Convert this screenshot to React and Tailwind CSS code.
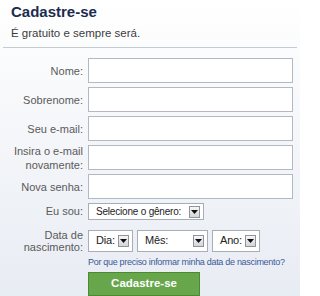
function Arrow() {
  return (
    <span className="ml-auto mr-[3px] flex h-[12px] w-[11px] shrink-0 items-center justify-center border border-[#8f949a] bg-gradient-to-b from-[#f7f7f7] to-[#d3d5d8]">
      <svg width="7" height="4" viewBox="0 0 7 4">
        <path d="M0 0h7L3.5 4z" fill="#111" />
      </svg>
    </span>
  )
}

function Select({ label, w, h, size = 'text-[11px]' }) {
  return (
    <div className={`flex items-center whitespace-nowrap border border-[#a8aeb7] bg-white pl-[7px] text-[#222] ${size} ${w} ${h}`}>
      <span className="tracking-[-0.2px]">{label}</span>
      <Arrow />
    </div>
  )
}

export default function App() {
  const fields = [
    ['Nome:'],
    ['Sobrenome:'],
    ['Seu e-mail:'],
    ['Insira o e-mail', 'novamente:'],
    ['Nova senha:'],
  ]

  return (
    <div className="h-[296px] w-[300px] overflow-hidden bg-gradient-to-b from-white to-[#e8ecf3] font-['Liberation_Sans',Arial,sans-serif]">
      <div className="pl-[11px] pt-[3px]">
        <h1 className="text-[15px] font-bold leading-[18px] text-[#1b2c4e]">Cadastre-se</h1>
        <p className="mt-[5px] text-[11.5px] leading-[15px] text-[#3c3c3c]">É gratuito e sempre será.</p>
      </div>
      <div className="mx-[3px] mt-[6px] h-px bg-[#c6cad1]" />

      <div className="mt-[10px] flex flex-col gap-[4px] pr-[7px]">
        {fields.map((f, i) => (
          <div key={i} className="flex h-[25px] items-center">
            <div className="w-[88px] shrink-0 pr-[5px] text-right text-[11px] leading-[14px] text-[#5a5a5a]">
              {f.map((line) => <div key={line}>{line}</div>)}
            </div>
            <div className="h-full flex-1 border border-[#b3b9c3] bg-white" />
          </div>
        ))}

        <div className="flex h-[17px] items-center">
          <div className="w-[88px] shrink-0 pr-[5px] text-right text-[11px] text-[#5a5a5a]">Eu sou:</div>
          <Select label="Selecione o gênero:" w="w-[116px]" h="h-[17px]" size="text-[10px]" />
        </div>

        <div className="mt-[4px] flex h-[25px] items-center">
          <div className="w-[88px] shrink-0 pr-[5px] text-right text-[11px] leading-[12px] text-[#5a5a5a]">
            <div>Data de</div>
            <div>nascimento:</div>
          </div>
          <div className="flex gap-[4px]">
            <Select label="Dia:" w="w-[45px]" h="h-[22px]" />
            <Select label="Mês:" w="w-[71px]" h="h-[22px]" />
            <Select label="Ano:" w="w-[48px]" h="h-[22px]" />
          </div>
        </div>
      </div>

      <div className="mt-[3px] pl-[88px] text-[9px] leading-[12px] tracking-[-0.3px] text-[#3b5998]">
        Por que preciso informar minha data de nascimento?
      </div>

      <div className="ml-[88px] mt-[4px] flex h-[24px] w-[112px] items-center justify-center border border-[#4a8a30] bg-[#68a64c] text-[11.5px] font-bold text-white">
        Cadastre-se
      </div>
    </div>
  )
}
